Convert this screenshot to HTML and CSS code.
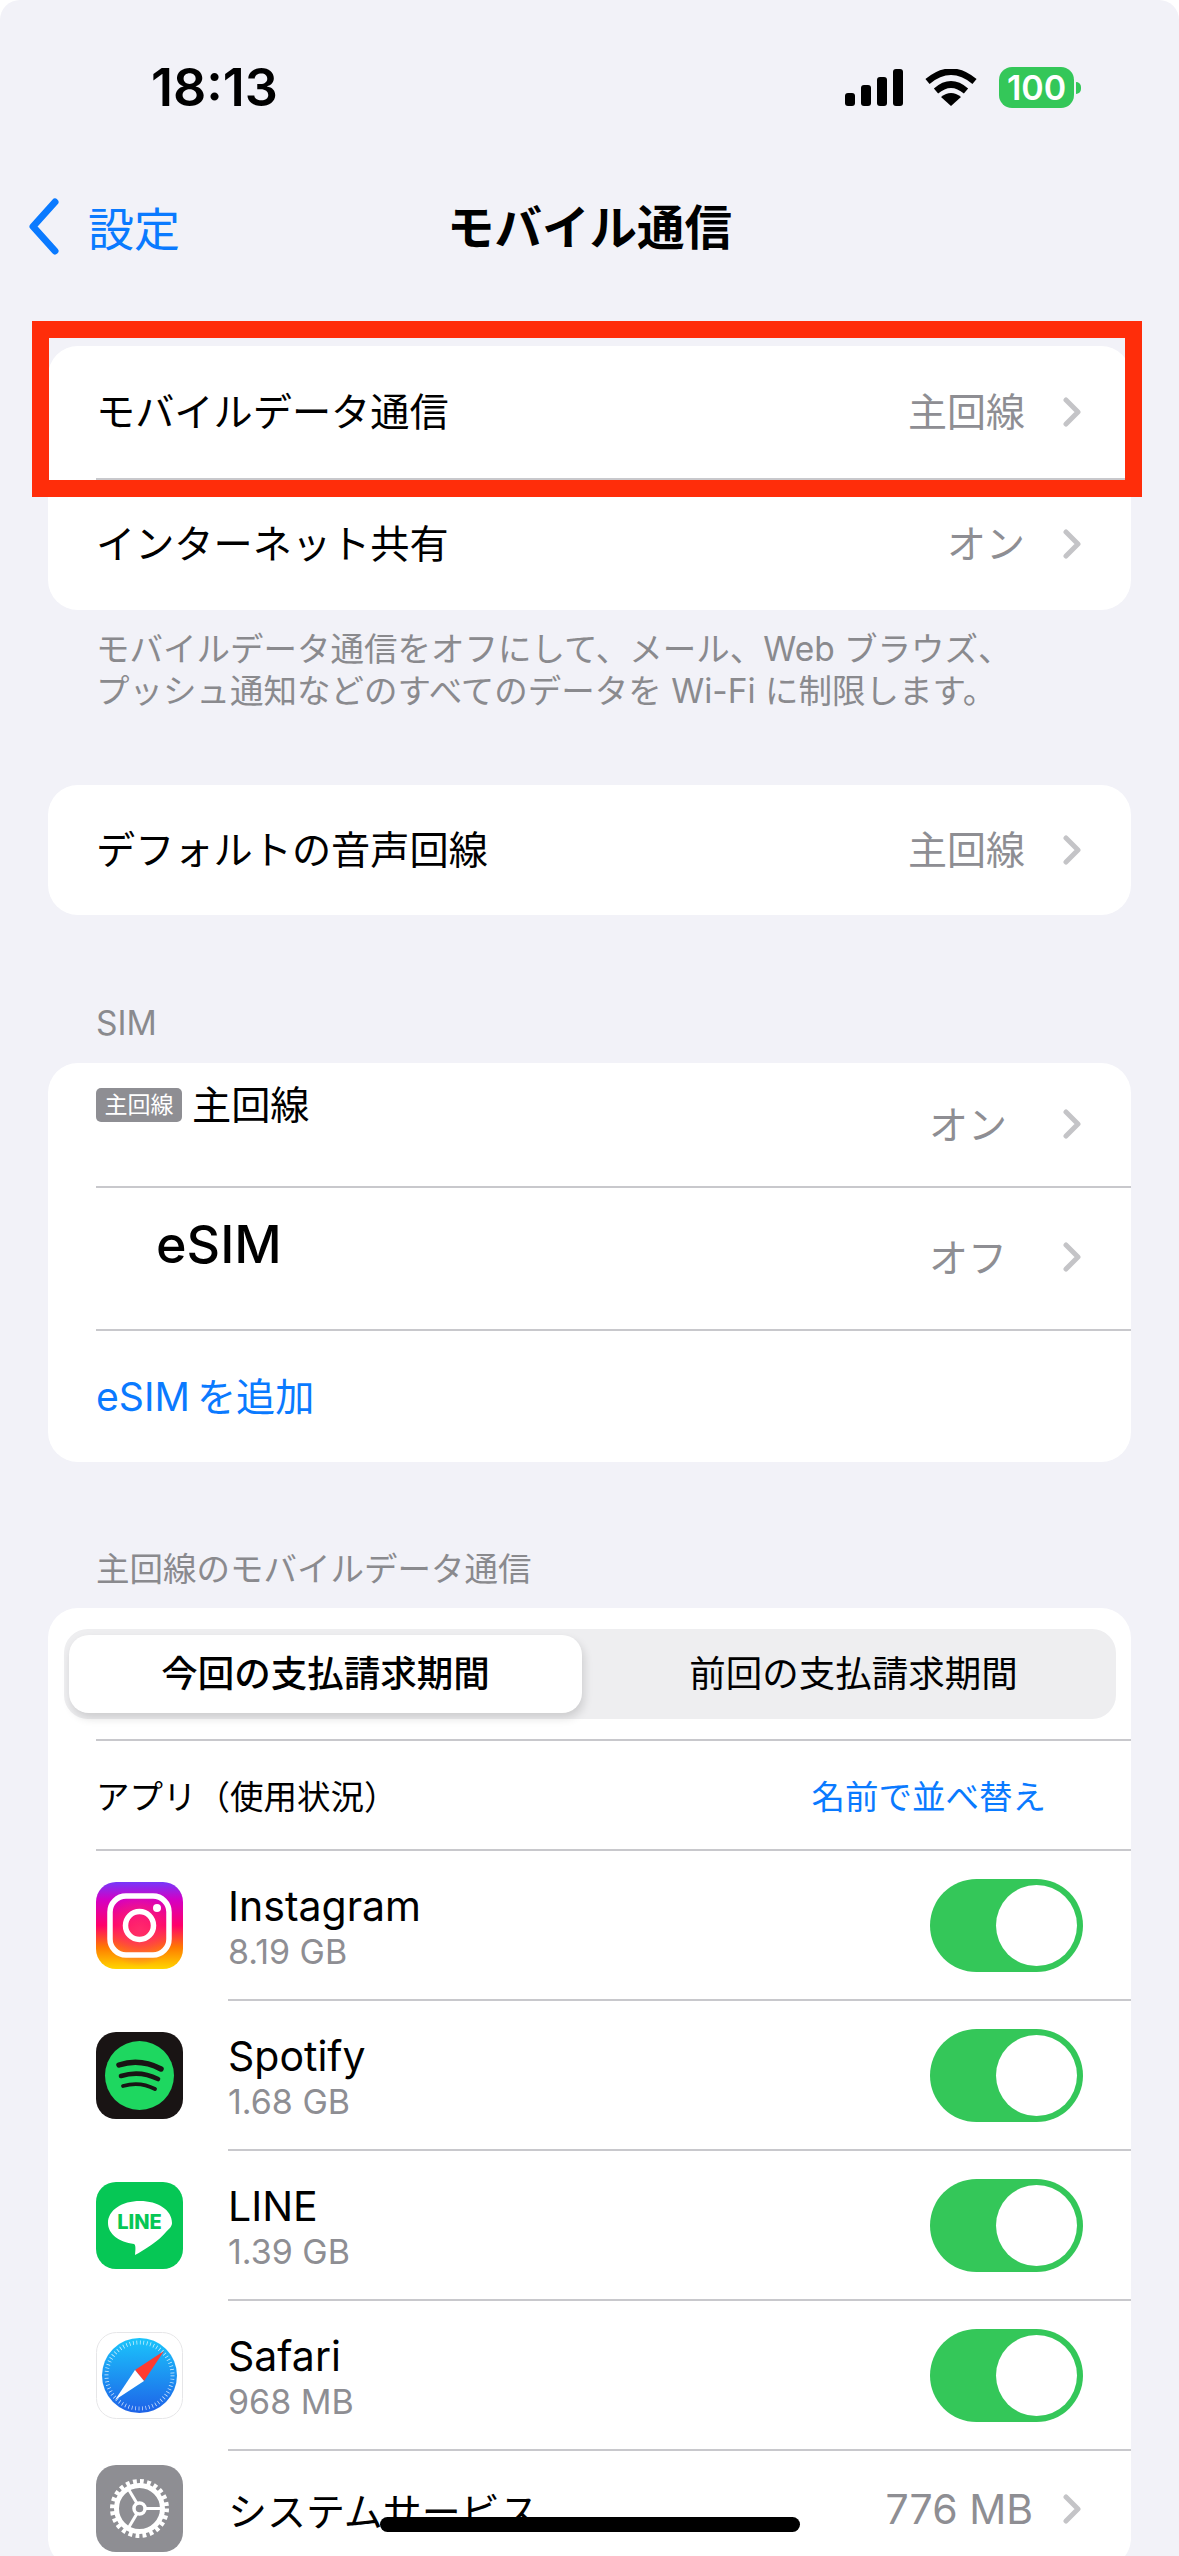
FILE: index.html
```html
<!DOCTYPE html>
<html lang="ja">
<head>
  <meta charset="UTF-8" />
  <title>モバイル通信</title>
  <link rel="stylesheet" href="styles.css">
</head>
<body>
  <div class="screen">
    <div class="status-bar">
      <span class="time">18:13</span>
      <div class="status-icons">
        <svg class="signal" width="58" height="37" viewBox="0 0 58 37">
          <rect x="0" y="24" width="10" height="13" rx="3"/>
          <rect x="16" y="16" width="10" height="21" rx="3"/>
          <rect x="32" y="8" width="10" height="29" rx="3"/>
          <rect x="48" y="0" width="10" height="37" rx="3"/>
        </svg>
        <svg class="wifi" width="52" height="37" viewBox="0 0 52 37">
          <path d="M26 37 L16 28 Q26 20 36 28 Z"/>
          <path d="M11 22 Q26 9 41 22" fill="none" stroke="#000" stroke-width="6.5"/>
          <path d="M2.5 12.5 Q26 -7 49.5 12.5" fill="none" stroke="#000" stroke-width="6.5"/>
        </svg>
        <div class="battery"><span class="battery-level">100</span><span class="battery-nub"></span></div>
      </div>
    </div>

    <div class="nav-bar">
      <div class="back">
        <svg width="32" height="57" viewBox="0 0 32 57"><path d="M27 4 L5 28.5 L27 53" fill="none" stroke="#0a7aff" stroke-width="7" stroke-linecap="round" stroke-linejoin="round"/></svg>
        <span>設定</span>
      </div>
      <h1>モバイル通信</h1>
    </div>

    <div class="highlight"></div>

    <div class="card first-card">
      <div class="row">
        <span class="label">モバイルデータ通信</span>
        <span class="value">主回線</span>
        <svg class="chevron" viewBox="0 0 18 30"><path d="M3 3 L15 15 L3 27"/></svg>
      </div>
      <div class="row">
        <span class="label">インターネット共有</span>
        <span class="value">オン</span>
        <svg class="chevron" viewBox="0 0 18 30"><path d="M3 3 L15 15 L3 27"/></svg>
      </div>
    </div>
    <p class="footnote">モバイルデータ通信をオフにして、メール、Web ブラウズ、<br>プッシュ通知などのすべてのデータを Wi-Fi に制限します。</p>

    <div class="card voice-card">
      <div class="row">
        <span class="label">デフォルトの音声回線</span>
        <span class="value">主回線</span>
        <svg class="chevron" viewBox="0 0 18 30"><path d="M3 3 L15 15 L3 27"/></svg>
      </div>
    </div>

    <div class="section-title sim-title">SIM</div>
    <div class="card">
      <div class="row sim-row">
        <div class="sim-name"><span class="sim-badge">主回線</span><span class="label">主回線</span></div>
        <span class="value sim-value">オン</span>
        <svg class="chevron sim-chevron" viewBox="0 0 18 30"><path d="M3 3 L15 15 L3 27"/></svg>
      </div>
      <div class="row esim-row">
        <span class="esim-name">eSIM</span>
        <span class="value sim-value">オフ</span>
        <svg class="chevron sim-chevron" viewBox="0 0 18 30"><path d="M3 3 L15 15 L3 27"/></svg>
      </div>
      <div class="row add-row">
        <span class="link add-link">eSIM を追加</span>
      </div>
    </div>

    <div class="section-title data-title">主回線のモバイルデータ通信</div>
    <div class="card">
      <div class="segment">
        <div class="segment-item selected">今回の支払請求期間</div>
        <div class="segment-item">前回の支払請求期間</div>
      </div>
      <div class="row apps-head">
        <span class="apps-label">アプリ（使用状況）</span>
        <span class="link sort-link">名前で並べ替え</span>
      </div>

      <div class="row app-row first-app">
        <svg class="app-icon" viewBox="0 0 87 87">
          <defs>
            <linearGradient id="ig-base" x1="0" y1="1" x2="0" y2="0">
              <stop offset="0" stop-color="#ffd600"/>
              <stop offset="0.25" stop-color="#ff7a00"/>
              <stop offset="0.5" stop-color="#ff0069"/>
              <stop offset="0.8" stop-color="#d300c5"/>
              <stop offset="1" stop-color="#7638fa"/>
            </linearGradient>
            <radialGradient id="ig-glow" cx="0.5" cy="0.55" r="0.42">
              <stop offset="0" stop-color="#ff2a6d"/>
              <stop offset="1" stop-color="#ff2a6d" stop-opacity="0"/>
            </radialGradient>
          </defs>
          <rect width="87" height="87" rx="20" fill="url(#ig-base)"/>
          <rect width="87" height="87" rx="20" fill="url(#ig-glow)"/>
          <rect x="14" y="14" width="59" height="59" rx="16" fill="none" stroke="#fff" stroke-width="5.5"/>
          <circle cx="43.5" cy="43.5" r="14" fill="none" stroke="#fff" stroke-width="5.5"/>
          <circle cx="61" cy="26" r="4" fill="#fff"/>
        </svg>
        <div class="app-text"><span class="app-name">Instagram</span><span class="app-size">8.19 GB</span></div>
        <div class="toggle"><span class="knob"></span></div>
      </div>

      <div class="row app-row">
        <svg class="app-icon" viewBox="0 0 87 87">
          <rect width="87" height="87" rx="20" fill="#191414"/>
          <circle cx="43.5" cy="43.5" r="34.5" fill="#1ed760"/>
          <g fill="none" stroke="#191414" stroke-linecap="round">
            <path d="M23 33 Q44 26 65 37" stroke-width="5.5"/>
            <path d="M25 44 Q44 38 62 47" stroke-width="4.6"/>
            <path d="M27 54 Q44 49 59 57" stroke-width="3.8"/>
          </g>
        </svg>
        <div class="app-text"><span class="app-name">Spotify</span><span class="app-size">1.68 GB</span></div>
        <div class="toggle"><span class="knob"></span></div>
      </div>

      <div class="row app-row">
        <div class="line-icon">
          <svg class="app-icon" viewBox="0 0 87 87">
            <rect width="87" height="87" rx="20" fill="#06c755"/>
            <path d="M44 19 C26 19 12 28 12 41 C12 52 23 60 38 62 C40 63 39.5 68 39 73 C47 69 64 58 70 50 C74 46 76 44 76 41 C76 28 62 19 44 19 Z" fill="#fff"/>
          </svg>
          <span class="line-text">LINE</span>
        </div>
        <div class="app-text"><span class="app-name">LINE</span><span class="app-size">1.39 GB</span></div>
        <div class="toggle"><span class="knob"></span></div>
      </div>

      <div class="row app-row">
        <svg class="app-icon" viewBox="0 0 87 87">
          <defs>
            <linearGradient id="safari-blue" x1="0" y1="0" x2="0" y2="1">
              <stop offset="0" stop-color="#1bc5fb"/>
              <stop offset="1" stop-color="#1e62e8"/>
            </linearGradient>
          </defs>
          <rect x="0.5" y="0.5" width="86" height="86" rx="20" fill="#fff" stroke="#e6e6e8"/>
          <circle cx="43.5" cy="43.5" r="37.5" fill="url(#safari-blue)"/>
          <circle cx="43.5" cy="43.5" r="33" fill="none" stroke="#fff" stroke-width="4" stroke-dasharray="0.7 2.76" opacity="0.85"/>
          <path d="M68 19 L48 49 L39 38 Z" fill="#ff3b30"/>
          <path d="M19 68 L39 38 L48 49 Z" fill="#fff"/>
        </svg>
        <div class="app-text"><span class="app-name">Safari</span><span class="app-size">968 MB</span></div>
        <div class="toggle"><span class="knob"></span></div>
      </div>

      <div class="row app-row system-row">
        <svg class="app-icon" viewBox="0 0 87 87">
          <rect width="87" height="87" rx="20" fill="#8e8e93"/>
          <circle cx="43.5" cy="43.5" r="23" fill="none" stroke="#fff" stroke-width="5"/>
          <circle cx="43.5" cy="43.5" r="27" fill="none" stroke="#fff" stroke-width="5" stroke-dasharray="3.8 3.27"/>
          <circle cx="43.5" cy="43.5" r="5.5" fill="none" stroke="#fff" stroke-width="3.5"/>
          <g stroke="#fff" stroke-width="3">
            <path d="M49 43.5 H67"/>
            <path d="M41 38.5 L31.5 22.5"/>
            <path d="M41 48.5 L31.5 64.5"/>
          </g>
        </svg>
        <span class="label system-label">システムサービス</span>
        <span class="value system-value">776 MB</span>
        <svg class="chevron" viewBox="0 0 18 30"><path d="M3 3 L15 15 L3 27"/></svg>
      </div>
    </div>

    <div class="home-indicator"></div>
  </div>
</body>
</html>
```

FILE: styles.css
```css
* {
  box-sizing: border-box;
}

html,
body {
  margin: 0;
  height: 2556px;
  overflow: hidden;
  background: #fff;
}

body {
  font-family: Inter, "Noto Sans CJK JP", sans-serif;
  color: #000;
}

.screen {
  position: relative;
  height: 2556px;
  padding: 0 48px;
  background: #f2f2f8;
  border-radius: 20px 20px 0 0;
  overflow: hidden;
}

/* status bar */
.status-bar {
  height: 176px;
  margin: 0 -48px;
  padding: 58px 98px 0 151px;
  display: flex;
  justify-content: space-between;
  align-items: flex-start;
}

.time {
  font-size: 52px;
  font-weight: 600;
  line-height: 60px;
}

.status-icons {
  display: flex;
  align-items: center;
  margin-top: 9px;
}

.signal {
  margin-right: 22px;
}

.wifi {
  margin-right: 22px;
}

.battery {
  display: flex;
  align-items: center;
}

.battery-level {
  width: 75px;
  height: 41px;
  background: #34c759;
  border-radius: 13px;
  color: #fff;
  font-size: 34px;
  font-weight: 600;
  line-height: 41px;
  text-align: center;
}

.battery-nub {
  width: 5px;
  height: 12px;
  margin-left: 2px;
  background: #34c759;
  border-radius: 0 6px 6px 0;
}

/* nav */
.nav-bar {
  position: relative;
  height: 102px;
  margin: 0 -48px;
  padding-bottom: 5px;
  display: flex;
  align-items: center;
  justify-content: center;
}

.nav-bar h1 {
  margin: 0;
  font-size: 47.5px;
  font-weight: 700;
}

.back {
  position: absolute;
  left: 28px;
  top: 17px;
  display: flex;
  align-items: center;
  gap: 28px;
  color: #0a7aff;
  font-size: 46px;
}

/* red annotation box */
.highlight {
  position: absolute;
  left: 32px;
  top: 321px;
  width: 1110px;
  height: 176px;
  border: 17px solid #ff2d0a;
  z-index: 2;
}

/* cards and rows */
.card {
  background: #fff;
  border-radius: 30px;
  overflow: hidden;
}

.first-card {
  margin-top: 68px;
}

.row {
  position: relative;
  display: flex;
  align-items: center;
  height: 132px;
  padding: 0 50px 0 48px;
}

.row + .row::before,
.apps-head::before {
  content: "";
  position: absolute;
  left: 48px;
  right: 0;
  top: 0;
  height: 2px;
  background: #c8c8cc;
}

.label {
  flex: 1;
  margin-bottom: 6px;
  font-size: 39.2px;
}

.value {
  margin-right: 38px;
  margin-bottom: 6px;
  font-size: 39px;
  color: #8e8e93;
}

.chevron {
  width: 18px;
  height: 30px;
  flex: none;
}

.chevron path {
  fill: none;
  stroke: #c4c4c7;
  stroke-width: 5;
  stroke-linecap: round;
  stroke-linejoin: round;
}

.footnote {
  margin: 18px 48px 0;
  height: 157px;
  font-size: 33.5px;
  line-height: 42px;
  color: #8a8a8e;
  white-space: nowrap;
}

.voice-card .row {
  height: 130px;
}

.section-title {
  padding-left: 48px;
  font-size: 33.5px;
  line-height: 42px;
  color: #8a8a8e;
}

.sim-title {
  margin-top: 87px;
  margin-bottom: 19px;
}

.data-title {
  margin-top: 86px;
  margin-bottom: 18px;
}

/* SIM card */
.sim-row {
  height: 123px;
  align-items: flex-start;
}

.sim-name {
  flex: 1;
  display: flex;
  align-items: center;
  gap: 10px;
  margin-top: 11px;
}

.sim-badge {
  width: 86px;
  height: 34px;
  background: #8e8e93;
  border-radius: 5px;
  color: #fff;
  font-size: 23px;
  line-height: 34px;
  text-align: center;
}

.sim-value {
  margin-top: 31px;
  margin-right: 56px;
}

.sim-chevron {
  margin-top: 46px;
}

.esim-row {
  height: 143px;
  align-items: flex-start;
}

.esim-name {
  flex: 1;
  margin: 29px 0 0 60px;
  font-size: 52px;
  font-weight: 500;
  line-height: 60px;
}

.esim-row .sim-value {
  margin-top: 41px;
}

.esim-row .sim-chevron {
  margin-top: 56px;
}

.add-row {
  height: 133px;
}

.link {
  color: #0a7aff;
}

.add-link {
  margin-bottom: 4px;
  font-size: 39.2px;
  word-spacing: -4px;
}

/* segmented control */
.segment {
  display: flex;
  margin: 21px 15px 20px 16px;
  height: 90px;
  padding: 6px 5px 6px;
  background: #eeeef0;
  border-radius: 24px;
}

.segment-item {
  flex: 1;
  padding-left: 14px;
  font-size: 36.5px;
  line-height: 78px;
  text-align: center;
}

.segment-item.selected {
  flex: none;
  width: 513px;
  padding-left: 0;
  background: #fff;
  border-radius: 20px;
  font-weight: 500;
  box-shadow: 2px 5px 10px rgba(0, 0, 0, 0.14);
}

.apps-head {
  height: 110px;
  padding-right: 85px;
  justify-content: space-between;
}

.apps-label,
.sort-link {
  font-size: 33.5px;
}

/* app rows */
.app-row {
  height: 150px;
  padding-top: 3px;
  padding-right: 48px;
}

.row + .app-row::before {
  left: 180px;
}

.row + .first-app::before {
  left: 48px;
}

.app-icon {
  width: 87px;
  height: 87px;
  flex: none;
  display: block;
}

.app-text {
  flex: 1;
  display: flex;
  flex-direction: column;
  margin-top: 3px;
  margin-left: 45px;
}

.app-name {
  font-size: 41px;
  line-height: 50px;
}

.app-size {
  font-size: 34px;
  line-height: 42px;
  color: #8e8e93;
}

.toggle {
  width: 153px;
  height: 93px;
  padding: 6px;
  display: flex;
  justify-content: flex-end;
  background: #34c759;
  border-radius: 47px;
}

.knob {
  width: 81px;
  height: 81px;
  background: #fff;
  border-radius: 50%;
}

.line-icon {
  position: relative;
  width: 87px;
  height: 87px;
}

.line-text {
  position: absolute;
  left: 0;
  right: 0;
  top: 28px;
  color: #06c755;
  font-size: 20px;
  font-weight: 800;
  line-height: 24px;
  text-align: center;
}

/* last row is cut by the bottom of the screen */
.system-row {
  height: 119px;
  padding-top: 0;
  padding-right: 50px;
}

.system-label {
  margin-bottom: 0;
  margin-left: 45px;
  font-size: 39px;
}

.system-value {
  margin-right: 30px;
  margin-bottom: 0;
  font-size: 41px;
}

.home-indicator {
  position: absolute;
  left: 380px;
  top: 2517px;
  width: 420px;
  height: 15px;
  background: #000;
  border-radius: 8px;
  z-index: 2;
}
```
